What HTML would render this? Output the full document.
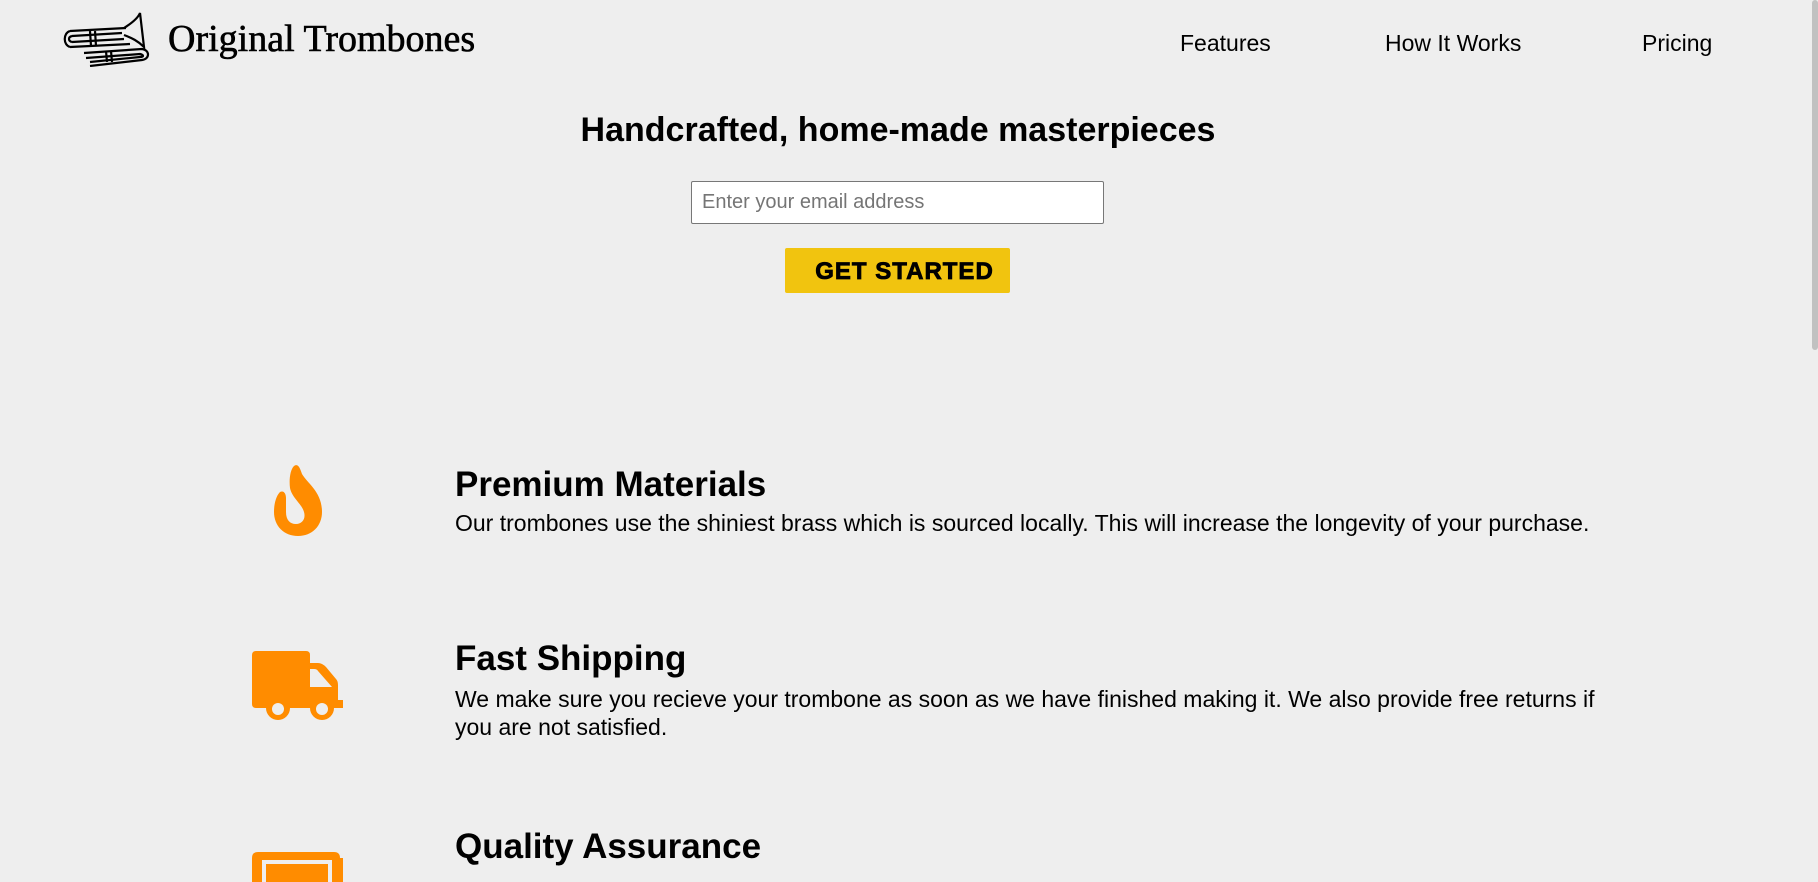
<!DOCTYPE html>
<html><head><style>
body{margin:0;width:1818px;height:873px;background:#eee;overflow:hidden;position:relative;font-family:"Liberation Sans",sans-serif;color:#000}
.a{position:absolute}
.nav{font-size:23px;top:30px}
h2,h3{margin:0;font-weight:bold}
.t{font-size:35px;left:455px}
.d{font-size:23px;left:455px;width:1160px;line-height:28px}
</style></head><body>
<svg class="a" style="left:60px;top:11px" width="90" height="56" viewBox="0 0 90 56" fill="none" stroke="#000" stroke-width="2.2">
<path d="M10 20 L66 17 M10 36 L70 33 M10 20 C3 22 3 34 10 36 M12 25 L62 22 M12 31 L64 28 M12 25 C8 26 8 30 12 31"/>
<path d="M64 17 C72 12 78 7 80 2 L84 36 C78 30 72 27 64 24"/>
<path d="M24 42 L82 38 C90 39 90 48 82 49 L30 55 M26 47 L80 43 C84 44 84 46 80 46 L30 51"/>
<path d="M30 20 L31 35 M35 20 L36 35 M46 40 L47 51 M51 40 L52 51"/>
</svg>
<div class="a" style="left:168px;top:17px;font-family:'Liberation Serif',serif;font-size:38px;font-weight:normal;-webkit-text-stroke:0.6px #000">Original Trombones</div>
<div class="a nav" style="left:1180px">Features</div>
<div class="a nav" style="left:1385px">How It Works</div>
<div class="a nav" style="left:1642px">Pricing</div>
<h2 class="a" style="left:0;width:1796px;text-align:center;top:111px;font-size:34px">Handcrafted, home-made masterpieces</h2>
<div class="a" style="left:691px;top:181px;width:411px;height:41px;border:1px solid #777;background:#fff;border-radius:2px;font-size:20px;color:#757575;line-height:41px;text-indent:10px">Enter your email address</div>
<div class="a" style="left:785px;top:248px;width:225px;height:45px;background:#f1c40f;border-radius:2px;font-size:24px;font-weight:900;line-height:47px;text-align:center;letter-spacing:1px;text-indent:14px;-webkit-text-stroke:0.8px #000">GET STARTED</div>
<div class="a" style="left:1812px;top:0;width:6px;height:350px;background:#c1c1c1;border-radius:3px"></div>
<svg class="a" style="left:268px;top:464px" width="60" height="74" viewBox="0 0 60 74"><path fill="#ff8c00" d="M26 2 C30 -1 32 4 34 10 C40 20 54 28 54 48 C54 62 44 72 30 72 C16 72 6 62 6 48 C6 40 8 32 12 28 C16 26 18 30 18 34 L18 48 C18 56 22 60 28 60 C34 60 38 55 36 48 C34 40 24 34 22 24 C21 16 22 6 26 2Z"/></svg>
<svg class="a" style="left:252px;top:651px" width="92" height="72" viewBox="0 0 92 72"><path fill="#ff8c00" d="M4 0 H54 Q58 0 58 4 V12 H66 Q70 12 74 16 L84 28 Q86 30 86 34 V49 H91 V57 H82 A12 12 0 0 1 58 57 H38 A12 12 0 0 1 14 57 H4 Q0 57 0 53 V4 Q0 0 4 0Z M58 18 V36 H80 L66 20 Q65 18 62 18Z"/><circle cx="26" cy="58" r="6" fill="#eee"/><circle cx="70" cy="58" r="6" fill="#eee"/></svg>
<svg class="a" style="left:252px;top:852px" width="92" height="30" viewBox="0 0 92 30"><path fill="#ff8c00" d="M6 0 H82 Q88 0 88 6 H91 V30 H0 V6 Q0 0 6 0Z"/><rect x="10" y="8" width="70" height="22" fill="#eee"/><rect x="14" y="12" width="62" height="18" fill="#ff8c00"/></svg>
<h3 class="a t" style="top:465px">Premium Materials</h3>
<div class="a d" style="top:509px">Our trombones use the shiniest brass which is sourced locally. This will increase the longevity of your purchase.</div>
<h3 class="a t" style="top:639px">Fast Shipping</h3>
<div class="a d" style="top:685px">We make sure you recieve your trombone as soon as we have finished making it. We also provide free returns if you are not satisfied.</div>
<h3 class="a t" style="top:827px">Quality Assurance</h3>
</body></html>
